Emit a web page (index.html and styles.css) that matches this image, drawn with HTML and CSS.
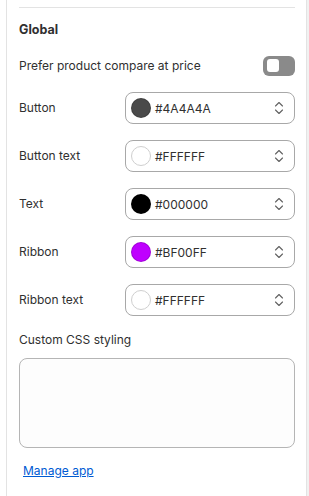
FILE: index.html
```html
<!DOCTYPE html>
<html>
<head>
<meta charset="utf-8">
<link rel="stylesheet" href="styles.css">
</head>
<body>
<div class="page">
  <div class="gutter"></div>
  <div class="panel">
    <hr class="divider">
    <h2 class="title">Global</h2>

    <div class="toggle-row">
      <span class="label">Prefer product compare at price</span>
      <span class="toggle"><span class="knob"></span></span>
    </div>

    <div class="color-row">
      <span class="label">Button</span>
      <div class="picker">
        <span class="swatch" style="background:#4A4A4A"></span>
        <span class="hex">#4A4A4A</span>
        <svg class="chev" width="10" height="14" viewBox="0 0 10 14"><path d="M1.5 5 5 1.5 8.5 5M1.5 9 5 12.5 8.5 9" fill="none" stroke="#616161" stroke-width="1.1" stroke-linecap="round" stroke-linejoin="round"/></svg>
      </div>
    </div>

    <div class="color-row">
      <span class="label">Button text</span>
      <div class="picker">
        <span class="swatch light" style="background:#FFFFFF"></span>
        <span class="hex">#FFFFFF</span>
        <svg class="chev" width="10" height="14" viewBox="0 0 10 14"><path d="M1.5 5 5 1.5 8.5 5M1.5 9 5 12.5 8.5 9" fill="none" stroke="#616161" stroke-width="1.1" stroke-linecap="round" stroke-linejoin="round"/></svg>
      </div>
    </div>

    <div class="color-row">
      <span class="label">Text</span>
      <div class="picker">
        <span class="swatch" style="background:#000000"></span>
        <span class="hex">#000000</span>
        <svg class="chev" width="10" height="14" viewBox="0 0 10 14"><path d="M1.5 5 5 1.5 8.5 5M1.5 9 5 12.5 8.5 9" fill="none" stroke="#616161" stroke-width="1.1" stroke-linecap="round" stroke-linejoin="round"/></svg>
      </div>
    </div>

    <div class="color-row">
      <span class="label">Ribbon</span>
      <div class="picker">
        <span class="swatch" style="background:#BF00FF"></span>
        <span class="hex">#BF00FF</span>
        <svg class="chev" width="10" height="14" viewBox="0 0 10 14"><path d="M1.5 5 5 1.5 8.5 5M1.5 9 5 12.5 8.5 9" fill="none" stroke="#616161" stroke-width="1.1" stroke-linecap="round" stroke-linejoin="round"/></svg>
      </div>
    </div>

    <div class="color-row">
      <span class="label">Ribbon text</span>
      <div class="picker">
        <span class="swatch light" style="background:#FFFFFF"></span>
        <span class="hex">#FFFFFF</span>
        <svg class="chev" width="10" height="14" viewBox="0 0 10 14"><path d="M1.5 5 5 1.5 8.5 5M1.5 9 5 12.5 8.5 9" fill="none" stroke="#616161" stroke-width="1.1" stroke-linecap="round" stroke-linejoin="round"/></svg>
      </div>
    </div>

    <label class="area-label" for="css">Custom CSS styling</label>
    <textarea id="css" class="css-box"></textarea>

    <a class="manage" href="#">Manage app</a>
  </div>
  <div class="track"></div>
</div>
</body>
</html>
```

FILE: styles.css
```css
* {
  box-sizing: border-box;
}
html, body {
  margin: 0;
  background: #fff;
}
body {
  font-family: Inter, "Noto Sans", sans-serif;
  font-size: 12px;
  color: #303030;
}
.page {
  display: flex;
  min-height: 496px;
}
.gutter {
  width: 6px;
}
.panel {
  width: 301px;
  border-left: 1px solid #e3e3e3;
  border-right: 1px solid #e3e3e3;
  padding: 7px 11px 0 12px;
}
.track {
  flex: 1;
  background: #f1f1f1;
}
.divider {
  margin: 0;
  border: none;
  border-top: 1px solid #e3e3e3;
}
.title {
  margin: 12px 0 0;
  font-size: 12.5px;
  font-weight: 650;
  line-height: 20px;
  color: #303030;
}
.label {
  line-height: 20px;
}
.toggle-row {
  display: flex;
  justify-content: space-between;
  align-items: center;
  margin-top: 16px;
  height: 20px;
}
.toggle {
  width: 32px;
  height: 20px;
  border-radius: 6px;
  background: #8a8a8a;
  padding: 3px 4px;
}
.knob {
  display: block;
  width: 12px;
  height: 13px;
  border-radius: 3px;
  background: #fff;
}
.color-row {
  display: flex;
  align-items: center;
  margin-top: 16px;
}
.color-row .label {
  width: 106px;
}
.picker {
  flex: 1;
  display: flex;
  align-items: center;
  height: 32px;
  border: 1px solid #a8a8a8;
  border-radius: 8px;
  padding: 0 10px 0 5px;
}
.swatch {
  width: 20px;
  height: 20px;
  border-radius: 50%;
  border: 1px solid rgba(0, 0, 0, 0.15);
}
.swatch.light {
  border-color: #cfcfcf;
}
.hex {
  flex: 1;
  margin-left: 4px;
  color: #303030;
}
.chev {
  display: block;
}
.area-label {
  display: block;
  margin-top: 16px;
  line-height: 16px;
}
.css-box {
  display: block;
  width: 100%;
  height: 90px;
  margin-top: 10px;
  border: 1px solid #b5b5b5;
  border-radius: 8px;
  background: #fdfdfd;
  resize: none;
  font: inherit;
}
.manage {
  display: inline-block;
  margin: 13px 0 0 4px;
  line-height: 20px;
  color: #005bd3;
  text-decoration: underline;
}
```
